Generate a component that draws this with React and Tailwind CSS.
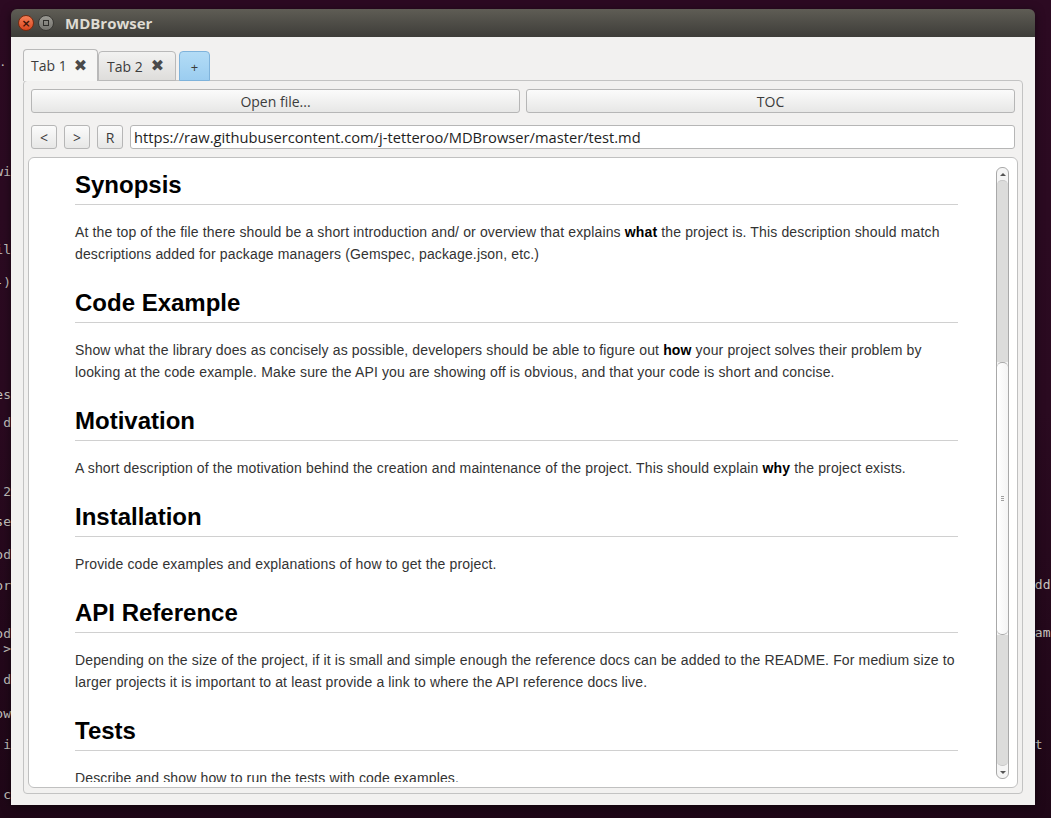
import React from "react";

const term = [
  { t: "wi", y: 163 },
  { t: "il", y: 241 },
  { t: "-)", y: 274 },
  { t: "es", y: 386 },
  { t: "d", y: 414 },
  { t: "2", y: 483 },
  { t: "se", y: 513 },
  { t: "od", y: 546 },
  { t: "or", y: 577 },
  { t: "od", y: 625 },
  { t: ">", y: 640 },
  { t: "d", y: 671 },
  { t: "ow", y: 705 },
  { t: "i", y: 736 },
  { t: "c", y: 786 },
];

const termR = [
  { t: "add", y: 576 },
  { t: "xam", y: 624 },
  { t: "nt", y: 736 },
];

function Section({ title, children }) {
  return (
    <section className="mt-[23px] first:mt-0">
      <h2 className="mb-[16px] pb-[4px] border-b border-[#d0d0d0] text-[24px] leading-[30px] font-bold text-black">
        {title}
      </h2>
      <p className="text-[14px] leading-[22px] tracking-[0.14px] text-[#333333]">{children}</p>
    </section>
  );
}

function TabClose() {
  return (
    <span className="text-[16px] text-[#4a4a4a] leading-none" style={{ fontFamily: '"DejaVu Sans", sans-serif' }}>
      ✖
    </span>
  );
}

export default function App() {
  const ui = { fontFamily: '"Open Sans", "DejaVu Sans", sans-serif' };
  const web = { fontFamily: '"Liberation Sans", Arial, sans-serif' };
  return (
    <div className="relative w-[1051px] h-[818px] overflow-hidden bg-gradient-to-b from-[#2c0a22] via-[#2a0a20] to-[#1f0717]">
      {term.map((s, i) => (
        <span
          key={i}
          className="absolute right-[1040px] text-[13px] leading-[18px] text-[#c9c6c0] whitespace-nowrap"
          style={{ top: s.y, fontFamily: '"DejaVu Sans Mono", monospace' }}
        >
          {s.t}
        </span>
      ))}
      {termR.map((s, i) => (
        <span
          key={i}
          className="absolute left-[1027px] text-[13px] leading-[18px] text-[#c9c6c0] whitespace-nowrap"
          style={{ top: s.y, fontFamily: '"DejaVu Sans Mono", monospace' }}
        >
          {s.t}
        </span>
      ))}
      <span className="absolute left-[1px] top-[52px] text-[13px] text-[#c9c6c0]">.</span>

      {/* window */}
      <div
        className="absolute left-[11px] top-[9px] w-[1024px] h-[796px] flex flex-col rounded-t-[6px] overflow-hidden shadow-[0_2px_10px_rgba(0,0,0,0.5)]"
        style={ui}
      >
        {/* title bar */}
        <div className="h-[28px] shrink-0 flex items-center bg-gradient-to-b from-[#5f5d55] to-[#3e3d39] pl-[7px]">
          <div className="w-[16px] h-[16px] rounded-full bg-gradient-to-b from-[#f57f56] to-[#d9461d] border border-[#7a2a10] flex items-center justify-center">
            <span className="text-[11px] leading-none text-[#3b1408] font-bold" style={{ fontFamily: '"DejaVu Sans", sans-serif' }}>
              ×
            </span>
          </div>
          <div className="ml-[4px] w-[16px] h-[16px] rounded-full bg-gradient-to-b from-[#9b9a94] to-[#74736e] border border-[#3a3935] flex items-center justify-center">
            <div className="w-[6px] h-[6px] border border-[#2f2e2b]" />
          </div>
          <span className="ml-[11px] text-[15px] font-bold text-[#dfdbd2]">MDBrowser</span>
        </div>

        {/* body */}
        <div className="flex-1 min-h-0 flex flex-col bg-[#f2f1f0] px-[12px] pt-[12px] pb-[11px]">
          {/* tabs */}
          <div className="h-[32px] shrink-0 flex items-end relative z-10">
            <div className="h-[32px] w-[75px] flex items-center pl-[7px] gap-[7px] bg-[#f6f6f5] border border-b-0 border-[#b9b9b9] rounded-t-[4px] text-[14px] text-[#3c3c3c]">
              <span>Tab 1</span>
              <TabClose />
            </div>
            <div className="h-[30px] w-[78px] flex items-center pl-[8px] gap-[8px] bg-gradient-to-b from-[#f2f2f1] to-[#dedddb] border border-[#b9b9b9] rounded-t-[4px] text-[14px] text-[#3c3c3c]">
              <span>Tab 2</span>
              <TabClose />
            </div>
            <div className="ml-[3px] h-[30px] w-[31px] flex items-center justify-center pt-[3px] bg-gradient-to-b from-[#b3dcf6] to-[#9bcdf0] border border-[#7fb3db] rounded-t-[4px] text-[13px] text-[#3c3c3c]">
              +
            </div>
          </div>

          {/* panel */}
          <div className="-mt-px flex-1 min-h-0 flex flex-col border border-[#c3c3c3] rounded-[4px] bg-[#f2f1f0] px-[4px] pt-[8px] pb-[5px]">
            <div className="mx-[3px] shrink-0 flex gap-[6px]">
              <button className="flex-1 h-[24px] rounded-[3px] border border-[#b6b6b6] bg-gradient-to-b from-[#fbfbfb] to-[#e7e7e6] text-[14px] text-[#3c3c3c]">
                Open file...
              </button>
              <button className="flex-1 h-[24px] rounded-[3px] border border-[#b6b6b6] bg-gradient-to-b from-[#fbfbfb] to-[#e7e7e6] text-[14px] text-[#3c3c3c]">
                TOC
              </button>
            </div>
            <div className="mx-[3px] mt-[12px] shrink-0 flex gap-[7px]">
              {["<", ">", "R"].map((b) => (
                <button
                  key={b}
                  className="w-[26px] h-[24px] rounded-[3px] border border-[#b6b6b6] bg-gradient-to-b from-[#fbfbfb] to-[#e7e7e6] text-[14px] text-[#3c3c3c]"
                >
                  {b}
                </button>
              ))}
              <div className="flex-1 h-[24px] rounded-[3px] border border-[#b6b6b6] bg-white flex items-center pl-[3px] text-[14.7px] text-[#1e1e1e]">
                https://raw.githubusercontent.com/j-tetteroo/MDBrowser/master/test.md
              </div>
            </div>

            {/* web view */}
            <div className="mt-[8px] flex-1 min-h-0 flex border border-[#c0c0c0] rounded-[6px] bg-white overflow-hidden">
              <div className="flex-1 min-w-0 mb-[5px] overflow-hidden pl-[46px] pt-[12px]" style={web}>
                <div className="w-[883px]">
                  <Section title="Synopsis">
                    At the top of the file there should be a short introduction and/ or overview that explains{" "}
                    <b className="text-black">what</b> the project is. This description should match descriptions added for
                    package managers (Gemspec, package.json, etc.)
                  </Section>
                  <Section title="Code Example">
                    Show what the library does as concisely as possible, developers should be able to figure out{" "}
                    <b className="text-black">how</b> your project solves their problem by looking at the code example. Make
                    sure the API you are showing off is obvious, and that your code is short and concise.
                  </Section>
                  <Section title="Motivation">
                    A short description of the motivation behind the creation and maintenance of the project. This should
                    explain <b className="text-black">why</b> the project exists.
                  </Section>
                  <Section title="Installation">Provide code examples and explanations of how to get the project.</Section>
                  <Section title="API Reference">
                    Depending on the size of the project, if it is small and simple enough the reference docs can be added to
                    the README. For medium size to larger projects it is important to at least provide a link to where the
                    API reference docs live.
                  </Section>
                  <Section title="Tests">Describe and show how to run the tests with code examples.</Section>
                </div>
              </div>

              {/* scrollbar */}
              <div className="mt-[9px] mb-[8px] mr-[8px] w-[13px] shrink-0 flex flex-col rounded-[6px] border border-[#a9a9a9] bg-[#f5f5f5] overflow-hidden">
                <div className="h-[12px] shrink-0 flex items-center justify-center">
                  <div className="w-0 h-0 border-l-[3px] border-r-[3px] border-b-[3px] border-l-transparent border-r-transparent border-b-[#555]" />
                </div>
                <div className="h-[182px] shrink-0 bg-[#dcdcdb] rounded-t-[5px] border-t border-[#c8c8c8]" />
                <div className="h-[273px] shrink-0 bg-gradient-to-r from-white to-[#f4f4f4] border-y border-[#a9a9a9] rounded-[5px] flex flex-col items-center justify-center gap-[1px]">
                  <div className="w-[3px] h-px bg-[#a0a0a0]" />
                  <div className="w-[3px] h-px bg-[#a0a0a0]" />
                  <div className="w-[3px] h-px bg-[#a0a0a0]" />
                </div>
                <div className="flex-1 bg-[#dcdcdb] rounded-b-[5px] border-b border-[#c8c8c8]" />
                <div className="h-[12px] shrink-0 flex items-center justify-center">
                  <div className="w-0 h-0 border-l-[3px] border-r-[3px] border-t-[3px] border-l-transparent border-r-transparent border-t-[#555]" />
                </div>
              </div>
            </div>
          </div>
        </div>
      </div>
    </div>
  );
}
